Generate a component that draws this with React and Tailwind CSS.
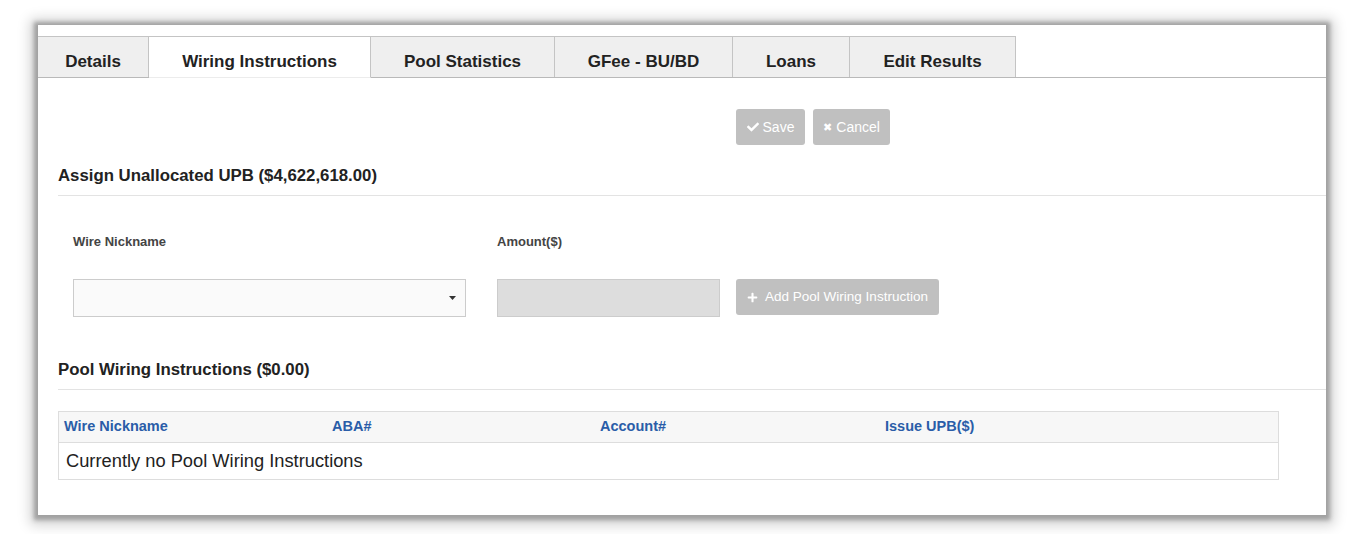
import React from "react";
import { FaCheck, FaPlus } from "react-icons/fa";

const tabs = [
  { label: "Details", w: "w-[111px]" },
  { label: "Wiring Instructions", w: "w-[222px]", active: true },
  { label: "Pool Statistics", w: "w-[184px]" },
  { label: "GFee - BU/BD", w: "w-[178px]" },
  { label: "Loans", w: "w-[117px]" },
  { label: "Edit Results", w: "w-[166px]" },
];

export default function App() {
  return (
    <div
      className="w-[1364px] h-[534px] bg-white pt-[25px] pl-[38px]"
      style={{ fontFamily: '"Liberation Sans", Arial, sans-serif' }}
    >
      <div className="w-[1288px] h-[490px] bg-white shadow-[0_1px_4px_4px_rgba(155,155,155,0.9),0_2px_12px_8px_rgba(0,0,0,0.18)]">
        {/* Tabs */}
        <div className="pt-[11px]">
          <div className="flex h-[42px] border-b border-[#b9b9b9]">
            {tabs.map((t) => (
              <div
                key={t.label}
                className={
                  t.active
                    ? "w-[222px] h-[42px] -mb-px bg-white border-t border-r border-[#c4c4c4] border-b border-b-[#ececec] flex items-end justify-center pb-[3px] text-[17px] font-bold text-[#222]"
                    : `${t.w} h-[41px] bg-[#efefef] border-t border-r border-[#c4c4c4] flex items-end justify-center pb-[3px] text-[17px] font-bold text-[#222]`
                }
              >
                {t.label}
              </div>
            ))}
          </div>
        </div>

        {/* Buttons */}
        <div className="flex gap-[8px] pl-[698px] pt-[31px]">
          <button className="h-[36px] w-[69px] rounded-[3px] bg-[#c0c0c0] text-white text-[14px] flex items-center justify-center gap-[4px]">
            <FaCheck className="w-[12px] h-[12px]" />
            <span>Save</span>
          </button>
          <button className="h-[36px] w-[77px] rounded-[3px] bg-[#c0c0c0] text-white text-[14px] flex items-center justify-center gap-[4px]">
            <span className="text-[11px] leading-none" style={{ fontFamily: '"DejaVu Sans", sans-serif' }}>✖</span>
            <span>Cancel</span>
          </button>
        </div>

        {/* Assign section */}
        <div className="ml-[20px] mt-[21px] border-b border-[#e3e3e3] pb-[9px]">
          <h2 className="text-[16.8px] font-bold text-[#222] leading-[20px]">
            Assign Unallocated UPB ($4,622,618.00)
          </h2>
        </div>

        <div className="flex pl-[35px] pt-[38px]">
          <div className="w-[424px]">
            <div className="text-[13px] font-bold text-[#444] leading-[16px]">Wire Nickname</div>
            <div className="mt-[29px] w-[393px] h-[38px] bg-[#fafafa] border border-[#cccccc] flex items-center justify-end pr-[9px]">
              <svg width="7" height="4" viewBox="0 0 7 4">
                <path d="M0 0 L7 0 L3.5 4 Z" fill="#333" />
              </svg>
            </div>
          </div>
          <div>
            <div className="text-[13px] font-bold text-[#444] leading-[16px]">Amount($)</div>
            <div className="mt-[29px] flex gap-[16px]">
              <div className="w-[223px] h-[38px] bg-[#dddddd] border border-[#cccccc]" />
              <button className="h-[36px] w-[203px] rounded-[3px] bg-[#c0c0c0] text-white text-[13.5px] flex items-center justify-center gap-[7px]">
                <FaPlus className="w-[11px] h-[11px]" />
                <span>Add Pool Wiring Instruction</span>
              </button>
            </div>
          </div>
        </div>

        {/* Pool Wiring Instructions */}
        <div className="ml-[20px] mt-[43px] border-b border-[#e3e3e3] pb-[9px]">
          <h2 className="text-[16.8px] font-bold text-[#222] leading-[20px]">
            Pool Wiring Instructions ($0.00)
          </h2>
        </div>

        <div className="ml-[20px] mt-[21px] w-[1221px] border border-[#dddddd]">
          <div className="flex h-[31px] items-center bg-[#f7f7f7] border-b border-[#dddddd] text-[14.5px] font-bold text-[#2a5da8]">
            <div className="w-[268px] pl-[5px]">Wire Nickname</div>
            <div className="w-[268px] pl-[5px]">ABA#</div>
            <div className="w-[285px] pl-[5px]">Account#</div>
            <div className="pl-[5px]">Issue UPB($)</div>
          </div>
          <div className="h-[36px] flex items-center pl-[7px] text-[18.3px] text-[#222]">
            Currently no Pool Wiring Instructions
          </div>
        </div>
      </div>
    </div>
  );
}
